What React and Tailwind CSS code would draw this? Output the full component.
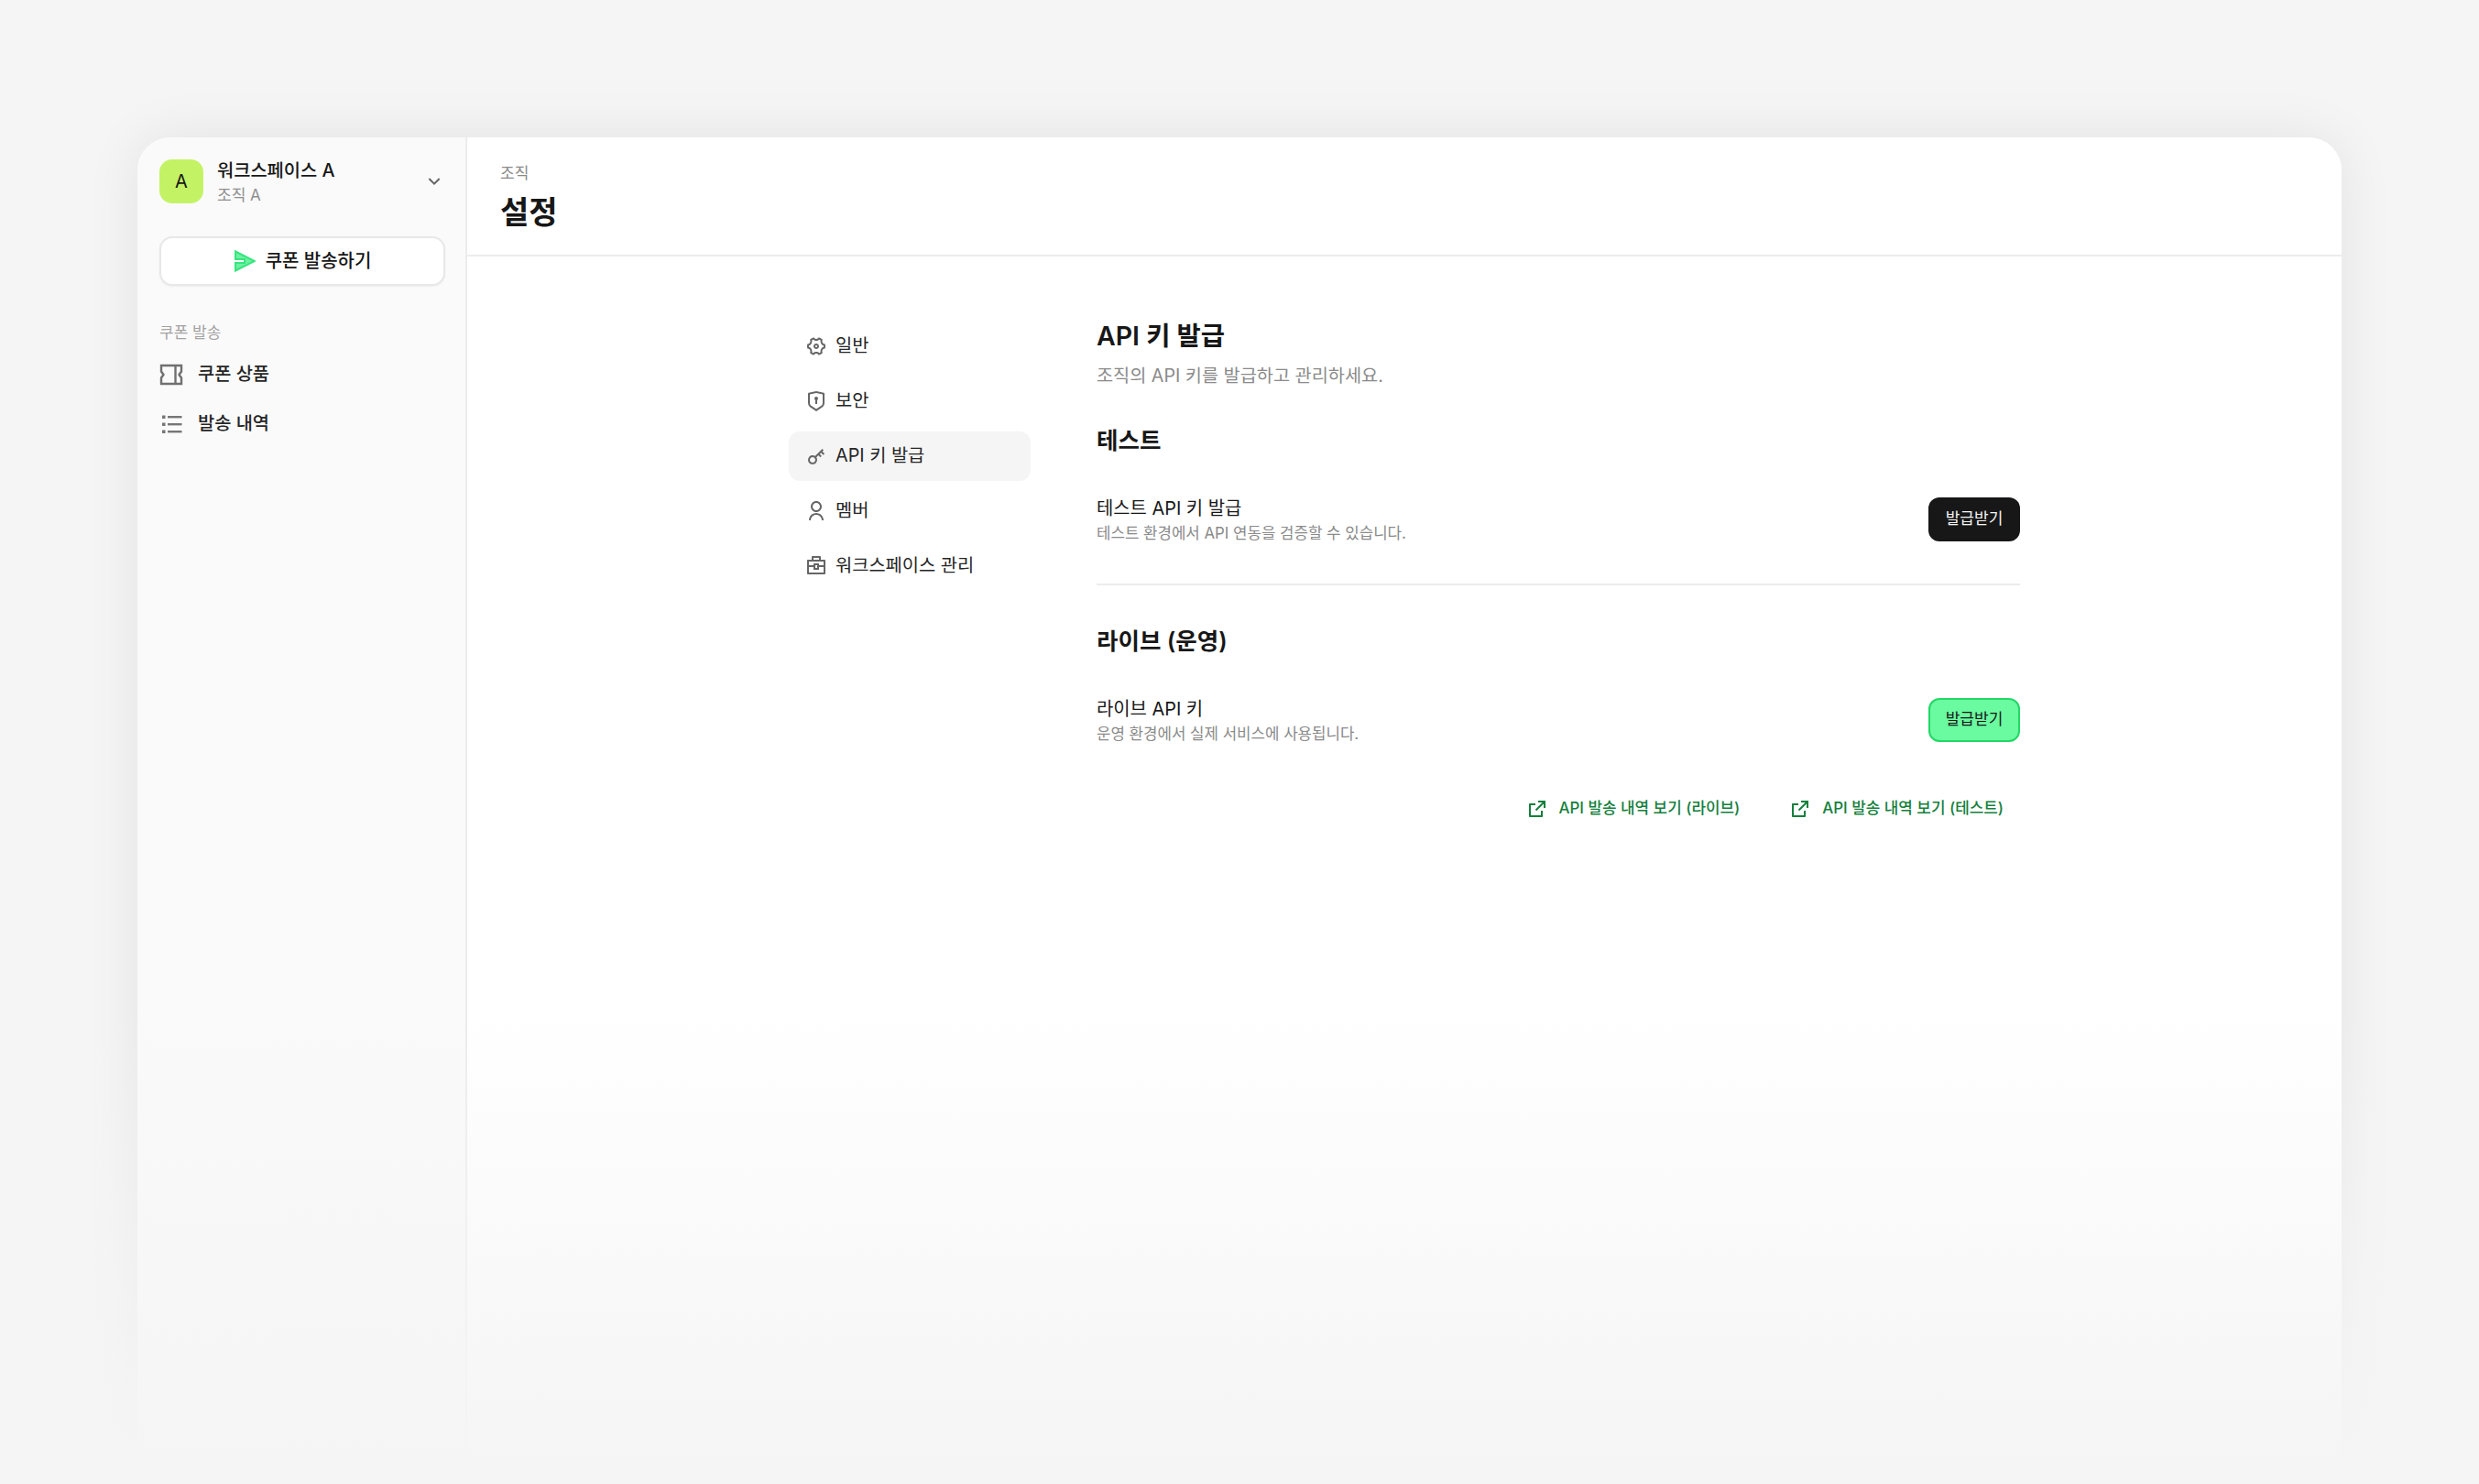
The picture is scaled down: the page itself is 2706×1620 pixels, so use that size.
import {
  RiArrowDownSLine,
  RiBriefcase4Line,
  RiExternalLinkLine,
  RiKey2Line,
  RiSettings4Line,
  RiShieldKeyholeLine,
  RiUserLine,
} from 'react-icons/ri'

const settingsMenu = [
  { label: '일반', icon: RiSettings4Line },
  { label: '보안', icon: RiShieldKeyholeLine },
  { label: 'API 키 발급', icon: RiKey2Line, active: true },
  { label: '멤버', icon: RiUserLine },
  { label: '워크스페이스 관리', icon: RiBriefcase4Line },
]

function SendIcon() {
  return (
    <svg width="24" height="24" viewBox="0 0 24 24">
      <path d="M2 1.500 23 12 2 22.500V14h10v-4H2Z" fill="#6cf0a0" stroke="#34e67c" strokeWidth="2" />
    </svg>
  )
}

function TicketIcon() {
  return (
    <svg width="26" height="26" viewBox="0 0 26 26" fill="none" stroke="#707070" strokeWidth="2.4">
      <path d="M2 3h22v6.500L21.500 13l2.500 3.500V23H2v-6.500L4.500 13 2 9.500Z" />
      <path d="M17.500 3v20" />
    </svg>
  )
}

function ListIcon() {
  return (
    <svg width="26" height="26" viewBox="0 0 26 26" fill="#777777">
      <rect x="3" y="3.500" width="3.500" height="3.500" />
      <rect x="3" y="11.500" width="3.500" height="3.500" />
      <rect x="3" y="19.500" width="3.500" height="3.500" />
      <rect x="9" y="4" width="15.500" height="2.400" />
      <rect x="9" y="12" width="15.500" height="2.400" />
      <rect x="9" y="20" width="15.500" height="2.400" />
    </svg>
  )
}

function KeyRow({ title, desc, live }) {
  return (
    <div className="flex items-center justify-between mt-[45px] h-[48px]">
      <div>
        <div className="text-[19.900px] leading-[28px] font-normal text-[#171717]">{title}</div>
        <div className="mt-[2px] text-[16.800px] leading-[22px] text-[#8a8a8a]">{desc}</div>
      </div>
      <button
        className={`w-[100px] h-[48px] rounded-[12px] text-[17px] font-normal ${
          live
            ? 'bg-[#6afaa0] border-2 border-[#22d866] text-[#171717]'
            : 'bg-[#171717] text-[#f5f5f5]'
        }`}
      >
        발급받기
      </button>
    </div>
  )
}

function HistoryLink({ label }) {
  return (
    <a className="flex items-center gap-[12px] text-[16.900px] font-medium text-[#15803d]">
      <RiExternalLinkLine size={24} />
      {label}
    </a>
  )
}

export default function App() {
  return (
    <div
      className="relative h-[1620px] w-full overflow-hidden bg-[#f5f5f5] pt-[150px] px-[150px]"
      style={{ fontFamily: 'Inter, "Noto Sans CJK KR", sans-serif' }}
    >
      <div className="flex h-[1470px] rounded-t-[36px] overflow-hidden bg-white shadow-[0_0_60px_rgba(0,0,0,0.08)]">
        {/* Sidebar */}
        <aside className="w-[360px] shrink-0 bg-[#fafafa] border-r-[2px] border-[#ececec] px-[24px] pt-[24px]">
          <div className="flex items-center h-[48px]">
            <div className="w-[48px] h-[48px] rounded-[14px] bg-[#c3f364] flex items-center justify-center text-[20px] text-[#171717]">
              A
            </div>
            <div className="ml-[15px] flex-1 pt-[2px]">
              <div className="text-[19.800px] leading-[26px] font-medium text-[#171717]">워크스페이스 A</div>
              <div className="mt-[2px] text-[17px] leading-[24px] text-[#8f8f8f]">조직 A</div>
            </div>
            <RiArrowDownSLine size={24} className="text-[#666666] mr-[-2px]" />
          </div>
          <button className="mt-[36px] w-[312px] h-[54px] rounded-[14px] bg-white border-2 border-[#e8e8e8] shadow-[0_1px_2px_rgba(0,0,0,0.05)] flex items-center justify-center gap-[11px] text-[20px] font-medium text-[#171717]">
            <SendIcon />
            쿠폰 발송하기
          </button>
          <div className="mt-[39px] text-[17px] leading-[24px] text-[#a3a3a3]">쿠폰 발송</div>
          <nav className="mt-[7px] flex flex-col">
            <a className="flex items-center gap-[16px] h-[54px] text-[19.800px] font-medium text-[#262626]">
              <TicketIcon />
              쿠폰 상품
            </a>
            <a className="flex items-center gap-[16px] h-[54px] text-[19.800px] font-medium text-[#262626]">
              <ListIcon />
              발송 내역
            </a>
          </nav>
        </aside>

        {/* Main */}
        <main className="flex-1 bg-white">
          <header className="h-[130px] border-b-[2px] border-[#ececec] px-[36px] pt-[27px]">
            <div className="text-[17px] leading-[24px] text-[#8a8a8a]">조직</div>
            <h1 className="mt-[9px] text-[34px] leading-[44px] font-semibold text-[#171717]">설정</h1>
          </header>
          <div className="flex justify-center pt-[66px]">
            <div className="flex gap-[72px] w-[1344px]">
              <nav className="w-[264px] shrink-0 flex flex-col gap-[6px] pt-[5px]">
                {settingsMenu.map(({ label, icon: Icon, active }) => (
                  <a
                    key={label}
                    className={`flex items-center gap-[9px] h-[54px] pl-[18px] rounded-[12px] text-[19.800px] font-normal text-[#262626] ${
                      active ? 'bg-[#f5f5f5]' : ''
                    }`}
                  >
                    <Icon size={24} className="text-[#666666]" />
                    {label}
                  </a>
                ))}
              </nav>
              <section className="w-[1008px] pt-[3px]">
                <h2 className="text-[28.500px] leading-[36px] font-semibold text-[#171717]">API 키 발급</h2>
                <p className="mt-[11px] text-[19.700px] leading-[28px] text-[#8a8a8a]">
                  조직의 API 키를 발급하고 관리하세요.
                </p>
                <h3 className="mt-[40px] text-[25.500px] leading-[34px] font-semibold text-[#171717]">테스트</h3>
                <KeyRow title="테스트 API 키 발급" desc="테스트 환경에서 API 연동을 검증할 수 있습니다." />
                <div className="mt-[46px] h-[2px] bg-[#ececec]" />
                <h3 className="mt-[44px] text-[25.500px] leading-[34px] font-semibold text-[#171717]">라이브 (운영)</h3>
                <KeyRow title="라이브 API 키" desc="운영 환경에서 실제 서비스에 사용됩니다." live />
                <div className="mt-[60px] flex justify-end gap-[54px] pr-[18px]">
                  <HistoryLink label="API 발송 내역 보기 (라이브)" />
                  <HistoryLink label="API 발송 내역 보기 (테스트)" />
                </div>
              </section>
            </div>
          </div>
        </main>
      </div>

      {/* bottom fade */}
      <div className="absolute inset-x-0 bottom-0 h-[520px] bg-gradient-to-b from-[#f5f5f500] to-[#f5f5f5] to-[96%]" />
    </div>
  )
}
